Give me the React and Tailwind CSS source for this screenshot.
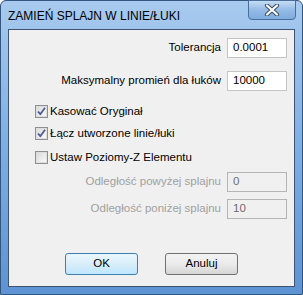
import React from "react";

function Check({ checked }) {
  return (
    <div className="w-[13px] h-[13px] border border-[#8f8f8f] bg-white flex items-center justify-center shrink-0">
      <div className="w-[11px] h-[11px] border border-[#dedede] bg-gradient-to-br from-[#dcdcdc] to-[#f8f8f8] flex items-center justify-center">
        {checked && (
          <svg width="9" height="9" viewBox="0 0 9 9">
            <path d="M1 4.5 L3.3 7.2 L8 0.8" fill="none" stroke="#4a5f97" strokeWidth="1.8" strokeLinejoin="round" />
          </svg>
        )}
      </div>
    </div>
  );
}

function Row({ label, value, disabled, mt }) {
  return (
    <div className={`flex items-center justify-end h-[20px] pr-[7px] ${mt}`}>
      <span className={`mr-[6px] ${disabled ? "text-[#a0a0a0]" : "text-black"}`}>{label}</span>
      <div
        className={`w-[60px] h-[20px] border flex items-center pl-[5px] ${
          disabled ? "border-[#b5b5b5] bg-[#f0f0f0] text-[#6d6d6d]" : "border-[#c5c5c5] bg-white text-black"
        }`}
      >
        {value}
      </div>
    </div>
  );
}

function CheckRow({ checked, label, mt }) {
  return (
    <div className={`flex items-center h-[13px] pl-[26px] ${mt}`}>
      <Check checked={checked} />
      <span className="ml-[2px] text-black">{label}</span>
    </div>
  );
}

export default function App() {
  return (
    <div
      className="w-[303px] h-[295px] rounded-t-[6px] border border-[#33557e] bg-gradient-to-b from-[#a8caee] via-[#7eaee3] to-[#5d93d3] flex flex-col"
      style={{ fontFamily: '"Liberation Sans", Arial, sans-serif' }}
    >
      <div className="h-[28px] flex items-start relative">
        <span className="ml-[7px] mt-[8px] text-[12px] leading-[14px] text-black">ZAMIEŃ SPLAJN W LINIE/ŁUKI</span>
        <div className="absolute left-[247px] top-[-1px] w-[48px] h-[20px] rounded-b-[4px] border border-[#4a6e9c] bg-gradient-to-b from-[#c4dcf4] via-[#95bbe6] to-[#7eacdf] flex items-center justify-center">
          <svg width="16" height="12" viewBox="0 0 16 12">
            <path d="M3 1.5 L13 10.5 M13 1.5 L3 10.5" stroke="#3d4f66" strokeWidth="4.2" strokeLinecap="round" />
            <path d="M3 1.5 L13 10.5 M13 1.5 L3 10.5" stroke="#ffffff" strokeWidth="2.2" strokeLinecap="round" />
          </svg>
        </div>
      </div>
      <div className="mx-[7px] mb-[7px] flex-1 border border-[#3e5472] bg-[#f0f0f0] flex flex-col text-[11.5px]">
        <Row label="Tolerancja" value="0.0001" mt="mt-[8px]" />
        <Row label="Maksymalny promień dla łuków" value="10000" mt="mt-[13px]" />
        <CheckRow checked label="Kasować Oryginał" mt="mt-[14px]" />
        <CheckRow checked label="Łącz utworzone linie/łuki" mt="mt-[9px]" />
        <CheckRow label="Ustaw Poziomy-Z Elementu" mt="mt-[11px]" />
        <Row label="Odległość powyżej splajnu" value="0" disabled mt="mt-[8px]" />
        <Row label="Odległość poniżej splajnu" value="10" disabled mt="mt-[7px]" />
        <div className="flex mt-[34px] pl-[56px] gap-[27px]">
          <div className="w-[73px] h-[22px] rounded-[3px] border border-[#3c7fb1] bg-gradient-to-b from-[#eaf6fd] via-[#d9eefa] to-[#bee6fd] flex items-center justify-center text-black">
            OK
          </div>
          <div className="w-[73px] h-[22px] rounded-[3px] border border-[#707070] bg-gradient-to-b from-[#f2f2f2] via-[#ebebeb] to-[#d6d6d6] flex items-center justify-center text-black">
            Anuluj
          </div>
        </div>
      </div>
    </div>
  );
}
